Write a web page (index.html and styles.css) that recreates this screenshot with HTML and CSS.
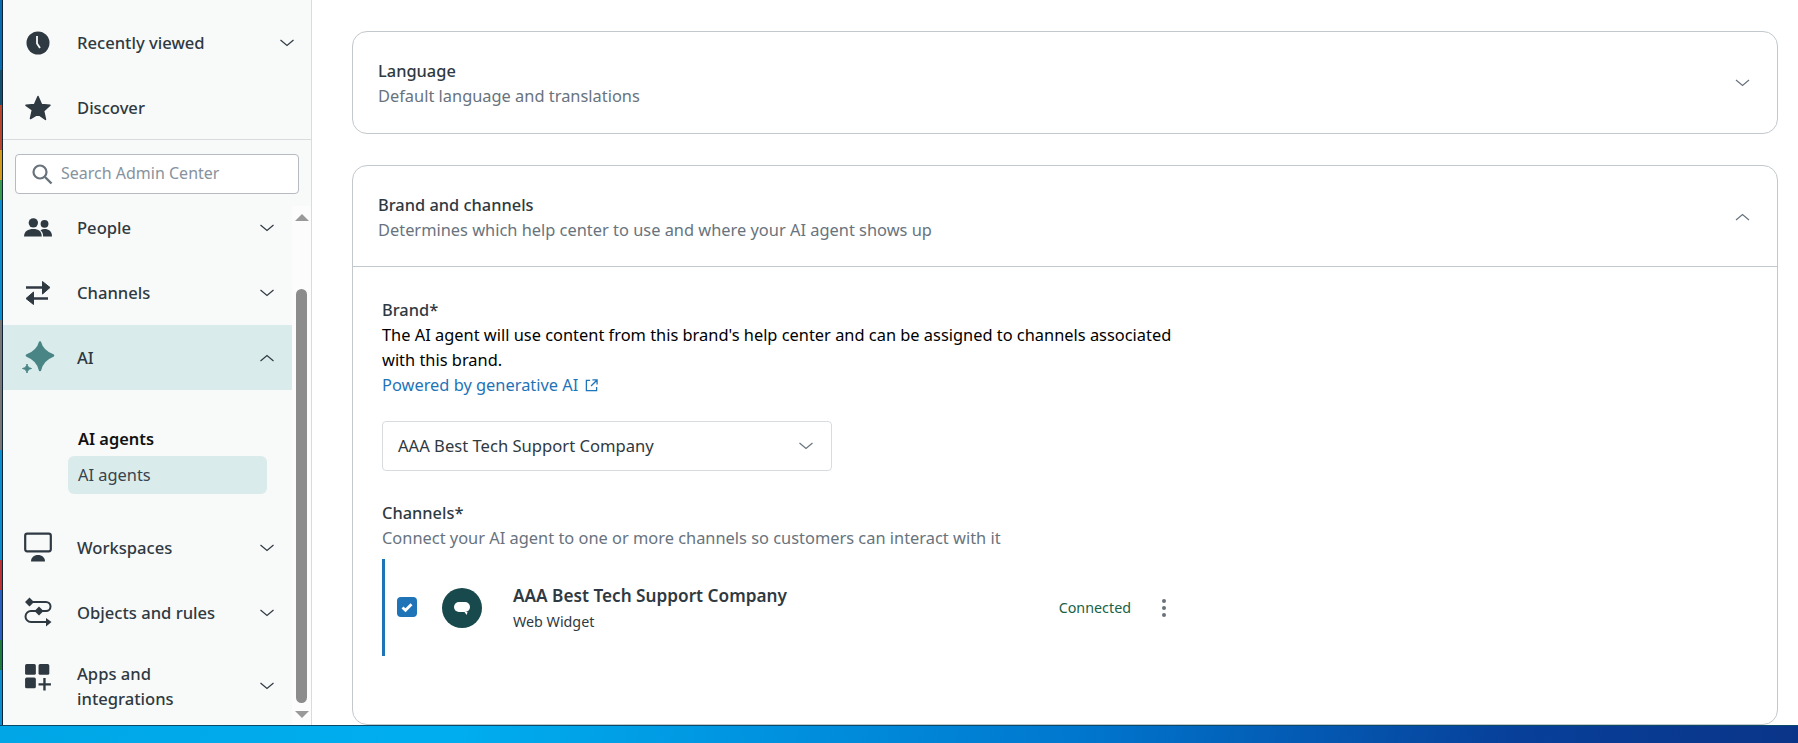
FILE: index.html
```html
<!DOCTYPE html>
<html lang="en">
<head>
    <meta charset="UTF-8">
    <title>AI agents - Admin Center</title>
    <link rel="stylesheet" href="styles.css">
</head>
<body>
    <svg class="defs" width="0" height="0">
        <symbol id="chev-down" viewBox="0 0 14 8"><path d="M.5 1 7 6.500 13.500 1" fill="none" stroke="currentColor" stroke-width="1.200"/></symbol>
        <symbol id="chev-up" viewBox="0 0 14 8"><path d="M.5 7 7 1.500 13.500 7" fill="none" stroke="currentColor" stroke-width="1.200"/></symbol>
    </svg>

    <div class="window">
        <div class="desk-strip"></div>
        <aside class="sidebar">
            <div class="nav-top">
                <div class="nav-item nav-item-wide">
                    <svg class="nav-icon" viewBox="-1 -1 28 28"><circle cx="13" cy="13" r="11.500" fill="#2f3941"/><path d="M12 6v7.500l3 4.500" fill="none" stroke="#f8f9f9" stroke-width="1.800"/></svg>
                    <span class="nav-label">Recently viewed</span>
                    <svg class="chev"><use href="#chev-down"/></svg>
                </div>
                <div class="nav-item nav-item-wide">
                    <svg class="nav-icon" viewBox="0 0 28 28"><path d="M14 2.500l3.500 8 8.500.8-6.400 5.700 1.900 8.500L14 20.100 6.500 24.500l1.900-8.500L2 11.300l8.500-.8z" fill="#2f3941" stroke="#2f3941" stroke-width="1.500" stroke-linejoin="round"/></svg>
                    <span class="nav-label">Discover</span>
                </div>
            </div>

            <div class="search-wrap">
                <div class="search-box">
                    <svg class="search-icon" viewBox="0 0 22 22"><circle cx="9" cy="9" r="6.500" fill="none" stroke="#68737d" stroke-width="2.200"/><path d="M14 14l6.500 6.500" stroke="#68737d" stroke-width="2.400"/></svg>
                    <span class="search-text">Search Admin Center</span>
                </div>
            </div>

            <div class="nav-scroll">
                <div class="nav-list">
                    <div class="nav-item">
                        <svg class="nav-icon" viewBox="0 0 30 24"><circle cx="10" cy="6.500" r="5" fill="#2f3941"/><circle cx="22" cy="7.500" r="4.200" fill="#2f3941"/><path d="M0 21c0-5.500 4.500-8 10-8s9 2.500 9 8z" fill="#2f3941"/><path d="M20.500 21c0-3-1-5.200-2.800-6.700 1.300-.8 2.800-1.100 4.300-1.100 4.500 0 8 2.400 8 7.800z" fill="#2f3941"/></svg>
                        <span class="nav-label">People</span>
                        <svg class="chev"><use href="#chev-down"/></svg>
                    </div>
                    <div class="nav-item">
                        <svg class="nav-icon" viewBox="0 0 26 28"><path d="M1 8.500h20M23 19.500H5" fill="none" stroke="#2f3941" stroke-width="2.600"/><path d="M17.500 2.500l7.500 6-7.500 6.500zM8.500 13l-7.500 6.500 7.500 6z" fill="#2f3941" stroke="#2f3941" stroke-linejoin="round"/></svg>
                        <span class="nav-label">Channels</span>
                        <svg class="chev"><use href="#chev-down"/></svg>
                    </div>
                    <div class="nav-item nav-item-active">
                        <svg class="nav-icon nav-icon-ai" viewBox="0 0 34 34"><path d="M19 1.500c1.500 6 5.500 10 13 13-7.500 3-11.500 7-13 14.500-1.500-7.500-5.500-11.500-13-14.500 7.500-3 11.500-7 13-13z" fill="#4a8585" stroke="#4a8585" stroke-width="2.500" stroke-linejoin="round"/><path d="M6 23c.4 2.700 1.600 3.800 4.500 4.500C7.600 28.200 6.400 29.300 6 32c-.4-2.700-1.600-3.800-4.500-4.500C4.400 26.800 5.600 25.700 6 23z" fill="#4a8585" stroke="#4a8585" stroke-linejoin="round"/></svg>
                        <span class="nav-label">AI</span>
                        <svg class="chev"><use href="#chev-up"/></svg>
                    </div>
                    <div class="subnav">
                        <div class="subnav-title">AI agents</div>
                        <div class="subnav-item">AI agents</div>
                    </div>
                    <div class="nav-item">
                        <svg class="nav-icon nav-icon-tall" viewBox="0 0 28 30"><rect x="1.200" y="1.200" width="25.600" height="17.600" rx="2" fill="none" stroke="#2f3941" stroke-width="2.200"/><path d="M7 29c0-4 3-6.500 7-6.500s7 2.500 7 6.500z" fill="#2f3941"/></svg>
                        <span class="nav-label">Workspaces</span>
                        <svg class="chev"><use href="#chev-down"/></svg>
                    </div>
                    <div class="nav-item">
                        <svg class="nav-icon nav-icon-tall" viewBox="0 0 28 30"><path d="M9 4.500h13a4.500 4.500 0 0 1 0 9H7a5 5 0 0 0 0 11h17" fill="none" stroke="#2f3941" stroke-width="2"/><path d="M5.500 0l4.500 4.500L5.500 9 1 4.500zM15 9l4.500 4.500L15 18l-4.500-4.500zM22 20.500l5.500 4-5.500 4.500z" fill="#2f3941"/></svg>
                        <span class="nav-label">Objects and rules</span>
                        <svg class="chev"><use href="#chev-down"/></svg>
                    </div>
                    <div class="nav-item nav-item-apps">
                        <svg class="nav-icon nav-icon-apps" viewBox="0 0 26 26"><rect x="1" y="1" width="10" height="10" rx="1.500" fill="#2f3941"/><rect x="13.500" y="1" width="10" height="10" rx="1.500" fill="#2f3941"/><rect x="1" y="13.500" width="10" height="10" rx="1.500" fill="#2f3941"/><path d="M19 14v11.500M13.500 19.800H25" stroke="#2f3941" stroke-width="2.200"/></svg>
                        <span class="nav-label nav-label-wrap">Apps and integrations</span>
                        <svg class="chev"><use href="#chev-down"/></svg>
                    </div>
                </div>
                <div class="scrollbar">
                    <div class="scroll-up"></div>
                    <div class="scroll-thumb"></div>
                    <div class="scroll-down"></div>
                </div>
            </div>
        </aside>

        <main class="content">
            <section class="card">
                <header class="card-head">
                    <div>
                        <div class="card-title">Language</div>
                        <div class="card-sub">Default language and translations</div>
                    </div>
                    <svg class="chev card-chev"><use href="#chev-down"/></svg>
                </header>
            </section>

            <section class="card card-open">
                <header class="card-head card-head-line">
                    <div>
                        <div class="card-title">Brand and channels</div>
                        <div class="card-sub">Determines which help center to use and where your AI agent shows up</div>
                    </div>
                    <svg class="chev card-chev"><use href="#chev-up"/></svg>
                </header>
                <div class="card-body">
                    <div class="field-label">Brand*</div>
                    <p class="field-help">The AI agent will use content from this brand's help center and can be assigned to channels associated with this brand.</p>
                    <a class="field-link" href="#">Powered by generative AI
                        <svg class="ext-icon" viewBox="0 0 14 14"><path d="M5.500 1.500H1.500v11h11V8.500M8 1h5v5M13 1 6.500 7.500" fill="none" stroke="#1f73b7" stroke-width="1.400"/></svg>
                    </a>

                    <div class="select-box">
                        <span class="select-text">AAA Best Tech Support Company</span>
                        <svg class="chev select-chev"><use href="#chev-down"/></svg>
                    </div>

                    <div class="field-label">Channels*</div>
                    <div class="field-hint">Connect your AI agent to one or more channels so customers can interact with it</div>

                    <div class="channel-row">
                        <div class="channel-check">
                            <svg viewBox="0 0 20 20"><path d="M5.500 10.500l3 2.800 6-6" fill="none" stroke="#fff" stroke-width="2.800"/></svg>
                        </div>
                        <div class="channel-logo">
                            <svg viewBox="0 0 40 40"><rect x="12" y="14" width="16" height="10" rx="5" fill="#fff"/><path d="M22.500 24h3l-.8 3z" fill="#fff"/></svg>
                        </div>
                        <div class="channel-info">
                            <div class="channel-name">AAA Best Tech Support Company</div>
                            <div class="channel-type">Web Widget</div>
                        </div>
                        <div class="channel-status">Connected</div>
                        <div class="kebab"><i></i><i></i><i></i></div>
                    </div>
                </div>
            </section>
        </main>
    </div>
</body>
</html>
```

FILE: styles.css
```css
* {
    box-sizing: border-box;
}

html, body {
    height: 100%;
    overflow: hidden;
}

body {
    margin: 0;
    font-family: "Noto Sans", Arial, sans-serif;
    font-size: 16.4px;
    color: #2f3941;
    background: linear-gradient(178deg, rgba(0, 40, 80, .35) 0, rgba(0, 40, 80, 0) 738px), linear-gradient(100deg, #00a4e4 0%, #00aeef 30%, #0078cf 62%, #07409a 85%, #0a3488 100%);
}

.defs {
    position: absolute;
}

.window {
    display: flex;
    height: 726px;
    background: #fff;
    border-bottom: 1px solid #0b4a66;
}

.desk-strip {
    width: 3px;
    flex: none;
    border-right: 1px solid #123;
    background: linear-gradient(#0a6cb0 0 70px, #14506e 70px 105px, #b8452c 105px 150px, #d39a1e 150px 180px, #3a9a4c 180px 200px, #0a8ed0 200px 320px, #777 320px 450px, #0a8ed0 450px 560px, #b33 560px 590px, #2a5ec0 590px 640px, #1f7a3e 640px 670px, #0a8ed0 670px);
}

/* sidebar */
.sidebar {
    width: 309px;
    flex: none;
    display: flex;
    flex-direction: column;
    background: #f8f9f9;
    border-right: 1px solid #d8dcde;
}

.nav-top {
    height: 140px;
    padding-top: 10px;
    border-bottom: 1px solid #d8dcde;
}

.nav-item {
    display: flex;
    align-items: center;
    height: 65px;
    padding-left: 21px;
    padding-right: 18px;
}

.nav-item-wide {
    padding-right: 0;
    width: 291px;
}

.nav-item-active {
    background: #d9eceb;
}

.nav-item-apps {
    height: 81px;
}

.nav-icon {
    width: 28px;
    height: 28px;
    flex: none;
    margin-right: 25px;
}

.nav-icon-tall {
    height: 31px;
}

.nav-icon-ai {
    width: 34px;
    height: 34px;
    margin-left: -3px;
    margin-right: 22px;
}

.nav-icon-apps {
    align-self: flex-start;
    margin-top: 18px;
}

.nav-label {
    flex: 1;
    font-weight: 500;
    font-size: 16.6px;
    line-height: 25px;
}

.nav-label-wrap {
    max-width: 160px;
    margin-right: auto;
}

.chev {
    width: 14px;
    height: 8px;
    flex: none;
    color: #2f3941;
}

.search-wrap {
    height: 55px;
    padding: 14px 12px 0 12px;
}

.search-box {
    display: flex;
    align-items: center;
    height: 40px;
    width: 284px;
    padding-left: 15px;
    background: #fff;
    border: 1px solid #b5bbc0;
    border-radius: 4px;
}

.search-icon {
    width: 22px;
    height: 22px;
    margin-right: 8px;
}

.search-text {
    font-size: 16px;
    color: #87929d;
    margin-top: -2px;
}

.nav-scroll {
    display: flex;
    flex: 1;
    min-height: 0;
}

.nav-list {
    width: 289px;
    flex: none;
}

.subnav {
    height: 125px;
    padding: 36px 0 0 65px;
}

.subnav-title {
    font-weight: 600;
    color: #111;
    line-height: 25px;
    margin-left: 10px;
}

.subnav-item {
    width: 199px;
    height: 38px;
    margin-top: 5px;
    padding-left: 10px;
    line-height: 37px;
    background: #d9eceb;
    border-radius: 6px;
    color: #39434b;
}

.scrollbar {
    flex: 1;
    display: flex;
    flex-direction: column;
    align-items: center;
    margin-top: 11px;
    padding-top: 8px;
    background: #fcfcfc;
}

.scroll-up, .scroll-down {
    width: 0;
    height: 0;
    border-left: 7px solid transparent;
    border-right: 7px solid transparent;
}

.scroll-up {
    border-bottom: 7px solid #999;
}

.scroll-down {
    margin-top: 8px;
    border-top: 7px solid #999;
}

.scroll-thumb {
    width: 11px;
    height: 414px;
    margin-top: 68px;
    background: #8c8c8c;
    border-radius: 6px;
}

/* main panel */
.content {
    flex: 1;
    min-width: 0;
    display: flex;
    flex-direction: column;
    gap: 31px;
    padding: 31px 20px 0 40px;
}

.card {
    border: 1px solid #c2c8cc;
    border-radius: 15px;
    background: #fff;
}

.card-open {
    flex: 1;
    min-height: 0;
}

.card-head {
    display: flex;
    align-items: center;
    justify-content: space-between;
    height: 101px;
    padding: 0 27px 0 25px;
}

.card-head-line {
    padding-top: 2px;
    border-bottom: 1px solid #c2c8cc;
}

.card-title {
    font-weight: 500;
    line-height: 25px;
}

.card-sub {
    color: #68737d;
    line-height: 25px;
}

.card-chev {
    color: #68737d;
    width: 15px;
}

.card-body {
    padding: 30px 29px;
}

.field-label {
    font-weight: 500;
    line-height: 25px;
}

.field-help {
    width: 790px;
    margin: 0;
    line-height: 25px;
    color: #000;
}

.field-link {
    display: block;
    line-height: 25px;
    color: #1f73b7;
    text-decoration: none;
}

.ext-icon {
    width: 13px;
    height: 13px;
    margin-left: 2px;
    vertical-align: -1px;
}

.select-box {
    display: flex;
    align-items: center;
    justify-content: space-between;
    width: 450px;
    height: 50px;
    margin: 24px 0 29px;
    padding: 0 18px 0 15px;
    border: 1px solid #d8dcde;
    border-radius: 4px;
}

.select-text {
    font-size: 16.6px;
    margin-top: -2px;
}

.select-chev {
    color: #68737d;
}

.field-hint {
    color: #68737d;
    line-height: 26px;
}

.channel-row {
    display: flex;
    align-items: center;
    width: 795px;
    height: 97px;
    margin-top: 8px;
    padding-left: 12px;
    border-left: 3px solid #1f73b7;
}

.channel-check {
    width: 20px;
    height: 20px;
    flex: none;
    margin-top: -2px;
    background: #1f73b7;
    border-radius: 4px;
}

.channel-check svg {
    display: block;
}

.channel-logo {
    width: 40px;
    height: 40px;
    flex: none;
    margin: 0 31px 0 25px;
    background: #17494d;
    border-radius: 50%;
}

.channel-logo svg {
    display: block;
}

.channel-info {
    flex: 1;
}

.channel-name {
    font-weight: 600;
    font-size: 17.2px;
    line-height: 24px;
    color: #2f3941;
}

.channel-type {
    font-size: 14.3px;
    line-height: 20px;
    margin-top: 4px;
    color: #2f3941;
}

.channel-status {
    font-size: 14.3px;
    color: #186146;
    margin-right: 31px;
}

.kebab {
    display: flex;
    flex-direction: column;
    gap: 3px;
    margin-right: 11px;
}

.kebab i {
    display: block;
    width: 4px;
    height: 4px;
    background: #68737d;
    border-radius: 50%;
}
```
